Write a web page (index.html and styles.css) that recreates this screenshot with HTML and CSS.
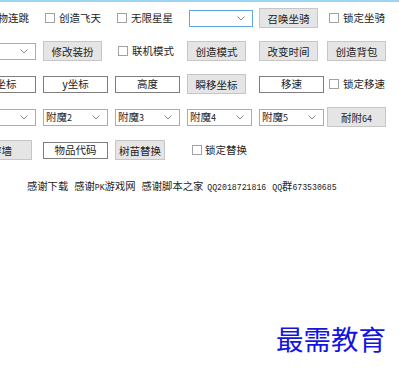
FILE: index.html
```html
<!DOCTYPE html>
<html lang="zh-CN">
<head>
    <meta charset="utf-8" />
    <link rel="stylesheet" href="styles.css">
</head>
<body>
    <div class="topbar"></div>
    <div class="panel">
        <div class="grid">
            <!-- row 1 -->
            <label class="check"><span class="box-check"></span>怪物连跳</label>
            <label class="check"><span class="box-check"></span>创造飞天</label>
            <label class="check"><span class="box-check"></span>无限星星</label>
            <div class="select focus"><span></span><svg viewBox="0 0 8 5"><path d="M0.5 0.5 L4 4 L7.5 0.5" /></svg></div>
            <button class="btn">召唤坐骑</button>
            <label class="check"><span class="box-check"></span>锁定坐骑</label>

            <!-- row 2 -->
            <div class="select"><span></span><svg viewBox="0 0 8 5"><path d="M0.5 0.5 L4 4 L7.5 0.5" /></svg></div>
            <button class="btn">修改装扮</button>
            <label class="check shift"><span class="box-check"></span>联机模式</label>
            <button class="btn">创造模式</button>
            <button class="btn">改变时间</button>
            <button class="btn">创造背包</button>

            <!-- row 3 -->
            <div class="field">x坐标</div>
            <div class="field">y坐标</div>
            <div class="field">高度</div>
            <button class="btn">瞬移坐标</button>
            <div class="field">移速</div>
            <label class="check"><span class="box-check"></span>锁定移速</label>

            <!-- row 4 -->
            <div class="select"><span>附魔<small>1</small></span><svg viewBox="0 0 8 5"><path d="M0.5 0.5 L4 4 L7.5 0.5" /></svg></div>
            <div class="select"><span>附魔<small>2</small></span><svg viewBox="0 0 8 5"><path d="M0.5 0.5 L4 4 L7.5 0.5" /></svg></div>
            <div class="select"><span>附魔<small>3</small></span><svg viewBox="0 0 8 5"><path d="M0.5 0.5 L4 4 L7.5 0.5" /></svg></div>
            <div class="select"><span>附魔<small>4</small></span><svg viewBox="0 0 8 5"><path d="M0.5 0.5 L4 4 L7.5 0.5" /></svg></div>
            <div class="select"><span>附魔<small>5</small></span><svg viewBox="0 0 8 5"><path d="M0.5 0.5 L4 4 L7.5 0.5" /></svg></div>
            <button class="btn">耐附<small>64</small></button>

            <!-- row 5 -->
            <button class="btn wide">穿墙</button>
            <div class="field">物品代码</div>
            <button class="btn narrow">树苗替换</button>
            <label class="check far"><span class="box-check"></span>锁定替换</label>
        </div>

        <p class="thanks">
            <span>感谢下载</span>
            <span>感谢<small>PK</small>游戏网</span>
            <span class="tight">感谢脚本之家</span>
            <span><small>QQ2018721816</small></span>
            <span><small>QQ</small>群<small>673530685</small></span>
        </p>
    </div>

    <div class="watermark">最需教育</div>
</body>
</html>
```

FILE: styles.css
```css
:root {
    --font-family: "Noto Sans CJK SC", "Liberation Sans", sans-serif;
    --text-color: #1c1c1c;
    --btn-background: #e5e5e5;
    --btn-border: #c6c6c6;
    --field-border: #7d7d7d;
    --select-border: #acacac;
    --focus-border: #5fa8e8;
    --check-border: #a2a2a2;
}

html, body {
    margin: 0;
    height: 100%;
    overflow: hidden;
    background: #fff;
}

body {
    position: relative;
    font-family: var(--font-family);
    font-size: 10.5px;
    color: var(--text-color);
}

.topbar {
    height: 2px;
    background: #9dd4f3;
}

.panel {
    padding-top: 6px;
}

.grid {
    display: grid;
    grid-template-columns: 72px 72px 72px 72px 68px 72px;
    grid-auto-rows: 20px;
    row-gap: 13px;
    align-items: center;
    margin-left: -29px;
    width: 428px;
}

.grid small {
    font-size: 9px;
}

.check {
    display: flex;
    align-items: center;
    gap: 4px;
    padding-left: 2px;
    line-height: 1;
    white-space: nowrap;
}

.check.shift {
    padding-left: 3px;
}

.check.far {
    padding-left: 5px;
    gap: 3px;
}

.box-check {
    width: 10px;
    height: 10px;
    box-sizing: border-box;
    border: 1px solid var(--check-border);
    background: #fff;
}

.btn {
    width: 59px;
    height: 20px;
    padding: 0;
    font-family: var(--font-family);
    font-size: 10.5px;
    color: var(--text-color);
    background: var(--btn-background);
    border: 1px solid var(--btn-border);
    box-sizing: border-box;
}

.btn.wide {
    width: 61px;
}

.btn.narrow {
    width: 50px;
}

.field {
    width: 65px;
    height: 17px;
    box-sizing: border-box;
    border: 1px solid var(--field-border);
    background: #fff;
    display: flex;
    align-items: center;
    justify-content: center;
    line-height: 1;
}

.select {
    width: 65px;
    height: 17px;
    box-sizing: border-box;
    border: 1px solid var(--select-border);
    background: #fff;
    display: flex;
    align-items: center;
    justify-content: space-between;
    padding: 0 7px 0 2px;
    line-height: 1;
}

.select.focus {
    border-color: var(--focus-border);
    margin-left: 2px;
    width: 64px;
}

.select svg {
    width: 8px;
    height: 5px;
    fill: none;
    stroke: #8a8a8a;
    stroke-width: 1;
}

.thanks {
    display: flex;
    gap: 6px;
    margin: 19px 0 0 27px;
    font-size: 10.3px;
    line-height: 14px;
    white-space: nowrap;
}

.thanks .tight {
    margin-right: -2px;
}

.thanks small {
    font-family: "Liberation Mono", monospace;
    font-size: 8.2px;
}

.watermark {
    position: absolute;
    left: 276px;
    top: 322px;
    font-family: var(--font-family);
    font-size: 27.5px;
    line-height: 32px;
    color: #1414e0;
}
```
